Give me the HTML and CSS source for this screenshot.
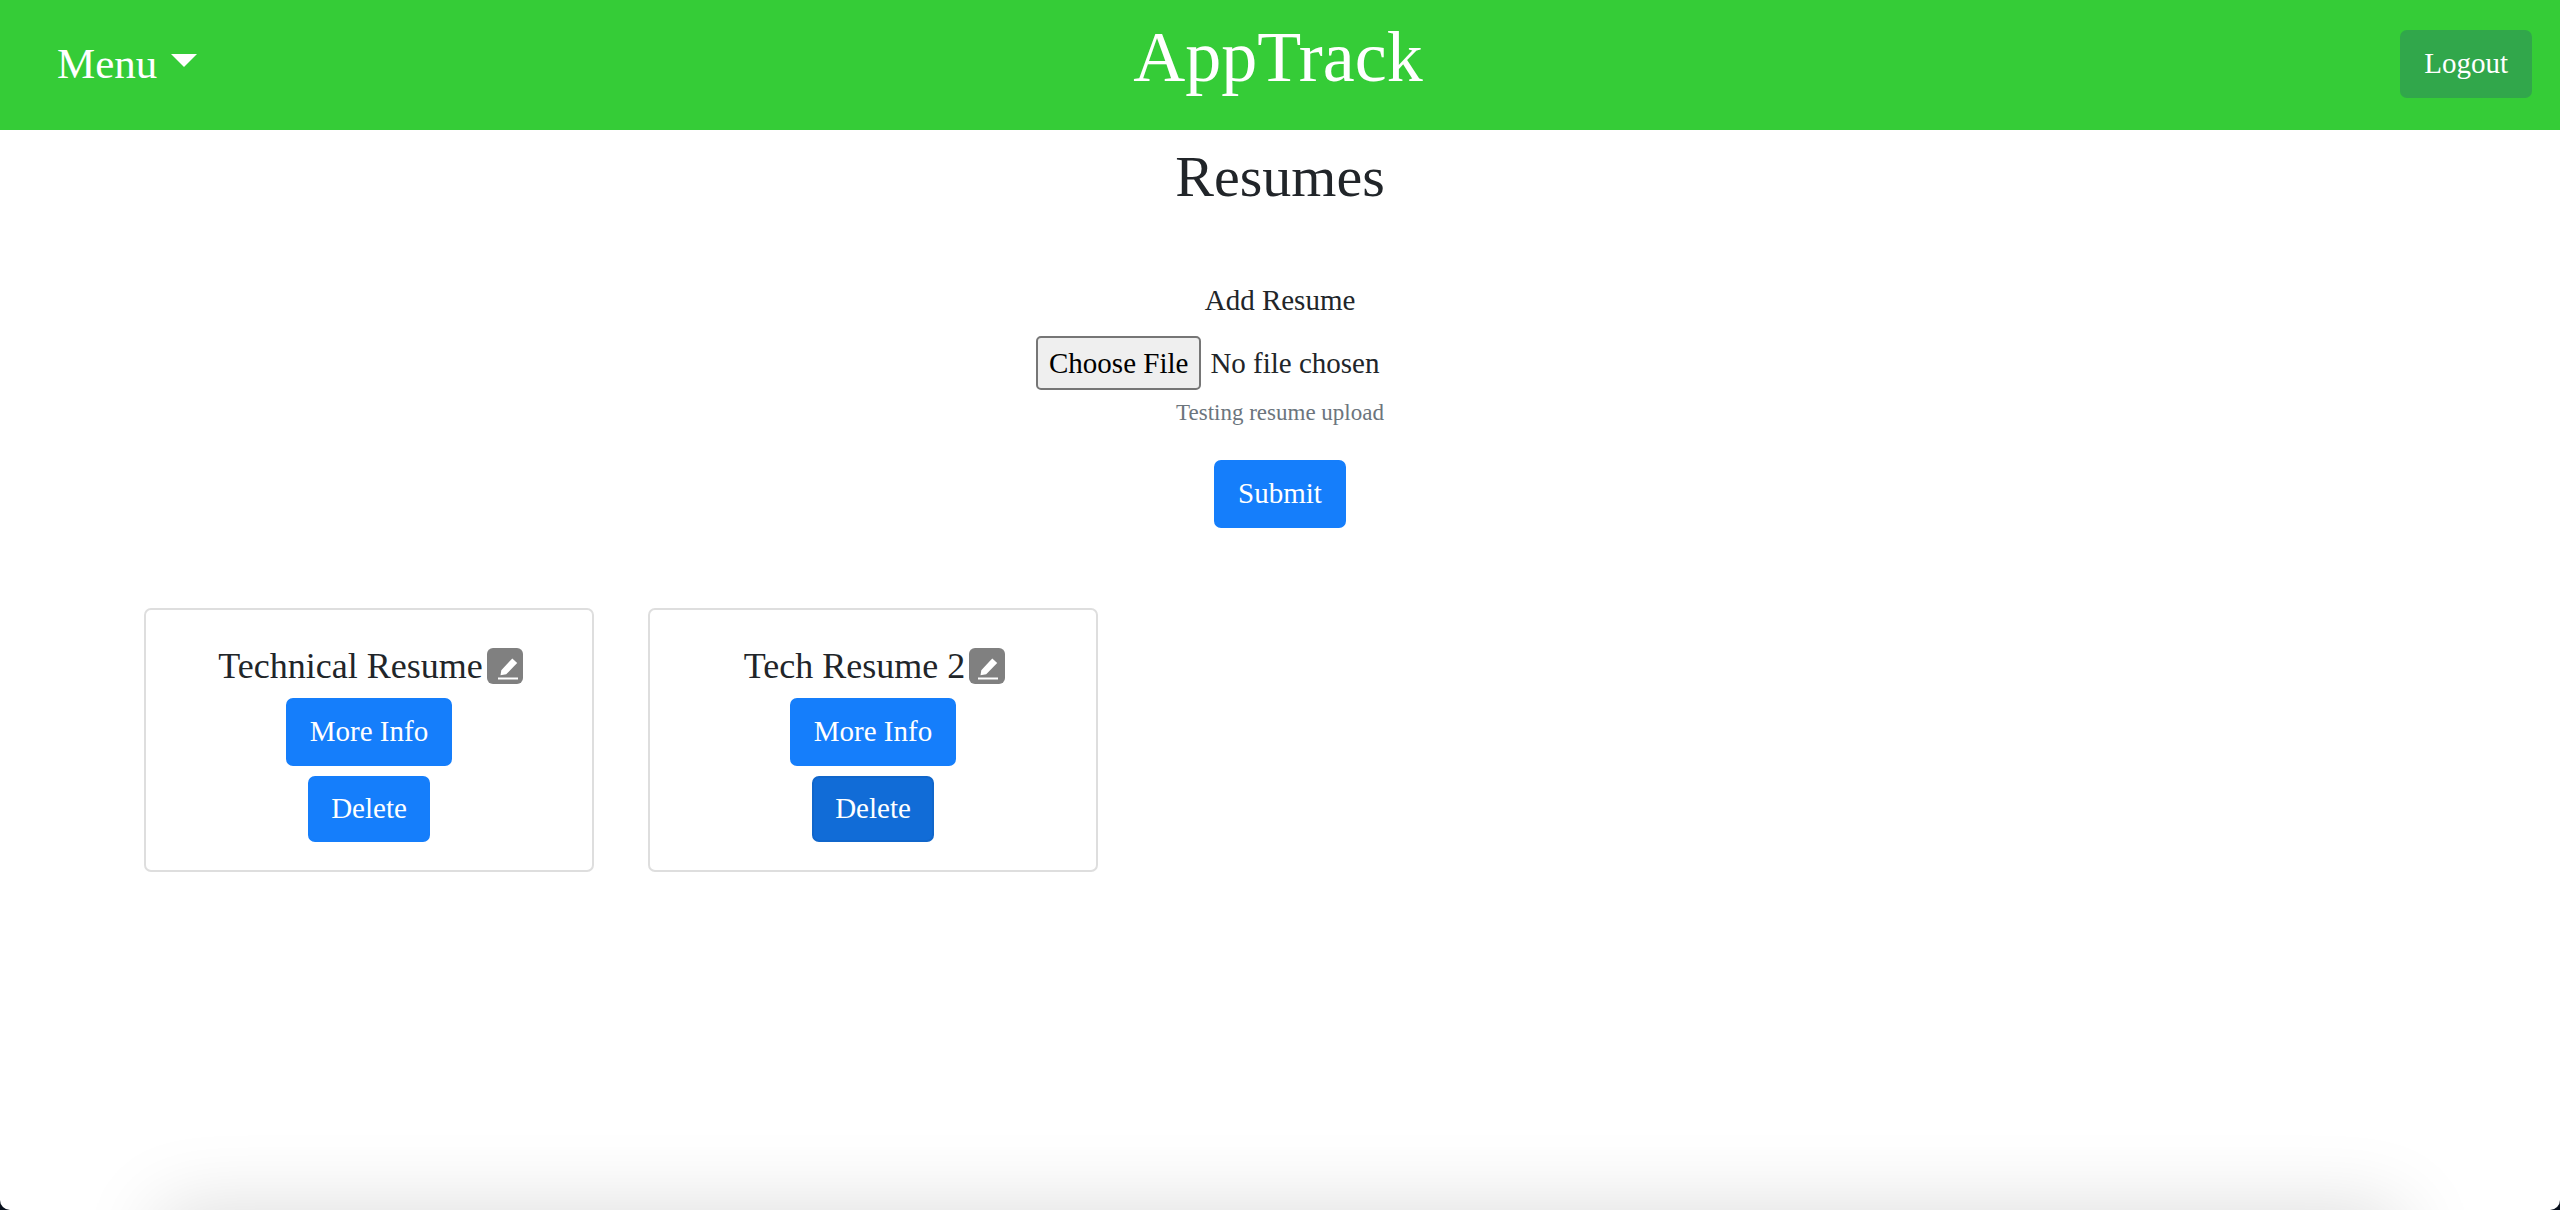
FILE: index.html
```html
<!DOCTYPE html>
<html lang="en">
<head>
<meta charset="utf-8">
<title>AppTrack</title>
<link rel="stylesheet" href="styles.css">
</head>
<body>
<div class="page">
  <header class="navbar">
    <button class="menu" type="button">Menu <span class="caret"></span></button>
    <h1 class="brand">AppTrack</h1>
    <button class="btn btn-success" type="button">Logout</button>
  </header>
  <main>
    <h2 class="title">Resumes</h2>
    <form class="upload">
      <label for="resume">Add Resume</label>
      <input class="file" id="resume" type="file" aria-describedby="resume-help">
      <small class="help" id="resume-help">Testing resume upload</small>
      <button class="btn" type="button">Submit</button>
    </form>
    <section class="cards">
      <article class="card">
        <div class="card-head">
          <h3 class="card-title">Technical Resume</h3>
          <button class="edit" type="button" aria-label="Edit name">
            <svg viewBox="0 0 36 36" width="36" height="36" fill="#fff"><path d="M13.5 27.2 14.3 22.3 22.4 13.5 25.3 10.5 30.2 15.1 27 18.3 19.2 26.3Z"/><path d="M11 29.5h20v2H11z"/></svg>
          </button>
        </div>
        <button class="btn" type="button">More Info</button>
        <button class="btn btn-delete" type="button">Delete</button>
      </article>
      <article class="card">
        <div class="card-head">
          <h3 class="card-title">Tech Resume 2</h3>
          <button class="edit" type="button" aria-label="Edit name">
            <svg viewBox="0 0 36 36" width="36" height="36" fill="#fff"><path d="M11.5 27.2 12.3 22.3 20.4 13.5 23.3 10.5 28.2 15.1 25 18.3 17.2 26.3Z"/><path d="M9 29.5h20v2H9z"/></svg>
          </button>
        </div>
        <button class="btn" type="button">More Info</button>
        <button class="btn btn-delete btn-active" type="button">Delete</button>
      </article>
    </section>
  </main>
</div>
</body>
</html>
```
FILE: styles.css
```css
* { box-sizing: border-box; }

html { background: #08101c; }

body {
  margin: 0;
  color: #212529;
  font-family: "Liberation Serif", "Times New Roman", serif;
  font-size: 29px;
  line-height: 44px;
}

h1, h2, h3 { margin: 0; font-weight: 400; }

button, input { font: inherit; }

.page {
  position: relative;
  min-height: 100vh;
  overflow: hidden;
  background: #fff;
  border-radius: 0 0 10px 10px;
}

/* soft shade rising from the bottom edge */
.page::after {
  content: "";
  position: absolute;
  top: 100%;
  left: 160px;
  right: 160px;
  height: 80px;
  box-shadow: 0 0 80px rgba(0, 0, 0, .15);
}

.navbar {
  display: grid;
  grid-template-columns: 1fr auto 1fr;
  align-items: center;
  height: 130px;
  padding: 0 28px 2px;
  background: #35cc37;
  color: #fff;
}

.menu {
  display: flex;
  align-items: center;
  justify-self: start;
  gap: 14px;
  padding: 0 29px;
  border: 0;
  background: none;
  color: inherit;
  font-size: 43px;
  line-height: 64px;
}

.caret {
  border: 13px solid transparent;
  border-top-color: #fff;
  border-bottom: 0;
  margin-bottom: 8px;
}

.brand {
  padding: 0 4px 14px 0;
  font-size: 72px;
  line-height: 86px;
}

.btn {
  height: 68px;
  padding: 0 22px 2px;
  border: 2px solid #157efb;
  border-radius: 7px;
  background: #157efb;
  color: #fff;
}

.btn-success {
  justify-self: end;
  border-color: #31a74b;
  background: #31a74b;
}

.btn-delete {
  height: 66px;
  padding: 0 21px 2px;
}

.btn-active {
  border-color: #1066cb;
  background: #116cd7;
}

.title {
  padding-top: 12px;
  font-size: 58px;
  line-height: 70px;
  text-align: center;
}

.upload {
  display: flex;
  flex-direction: column;
  align-items: center;
  padding-top: 66px;
}

.file {
  width: 488px;
  height: 56px;
  margin-top: 14px;
}

.file::file-selector-button {
  height: 54px;
  margin: 0 9px 0 0;
  padding: 0 11px;
  border: 2px solid #767676;
  border-radius: 5px;
  background: #efefef;
  color: #000;
  font: inherit;
}

.help {
  margin: 3px 0 29px;
  color: #6c757d;
  font-size: 23px;
  line-height: 36px;
}

.cards {
  display: flex;
  flex-wrap: wrap;
  gap: 54px;
  padding: 80px 144px;
}

.card {
  display: flex;
  flex-direction: column;
  align-items: center;
  gap: 10px;
  width: 450px;
  padding: 36px 28px 28px;
  border: 2px solid #dedede;
  border-radius: 7px;
}

.card-head {
  display: flex;
  align-items: center;
  gap: 4px;
  height: 42px;
  padding: 0 0 2px 3px;
}

.card-title { font-size: 36px; line-height: 42px; }

.edit {
  display: flex;
  padding: 0;
  border: 0;
  border-radius: 6px;
  background: #808080;
}
```
